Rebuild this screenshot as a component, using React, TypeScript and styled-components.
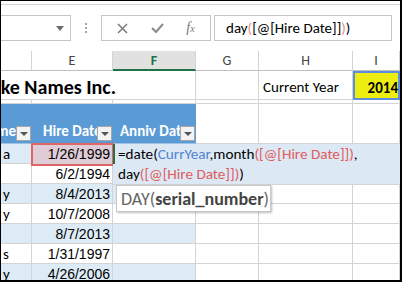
import styled, { createGlobalStyle } from "styled-components";

const GlobalStyle = createGlobalStyle`
  html, body {
    margin: 0;
    padding: 0;
    background: #ffffff;
  }
  * {
    box-sizing: border-box;
  }
`

const font = `Calibri, Carlito, Lato, "Liberation Sans", sans-serif`
const columns = "31px 81px 83px 63px 94px 1fr"

const Frame = styled.div`
  position: relative;
  width: 402px;
  height: 282px;
  overflow: hidden;
  background: #ffffff;
  border-style: solid;
  border-color: #000000;
  border-width: 1px 2px 2px 1px;
  font-family: ${font};
  color: #000000;
`

const TopRule = styled.div`
  height: 4px;
  border-bottom: 1px solid #d6d6d6;
`

const FormulaBar = styled.div`
  height: 46px;
  padding-top: 10px;
  display: flex;
  align-items: flex-start;
`

const NameBox = styled.div`
  width: 70px;
  height: 26px;
  border: 1px solid #c6c6c6;
  border-left: none;
  display: flex;
  align-items: center;
  justify-content: flex-end;
  padding-right: 6px;
`

const Dots = styled.div`
  margin-left: 14px;
  height: 26px;
  display: flex;
  flex-direction: column;
  justify-content: center;
  gap: 2px;
  span {
    width: 2px;
    height: 2px;
    background: #a8a8a8;
  }
`

const ButtonBox = styled.div`
  margin-left: 14px;
  width: 110px;
  height: 26px;
  border: 1px solid #c6c6c6;
  display: flex;
  align-items: center;
  justify-content: space-around;
  padding: 0 4px;
`

const FxLabel = styled.span`
  font-family: "Liberation Serif", serif;
  font-style: italic;
  font-size: 14px;
  color: #777777;
  small {
    font-size: 10px;
  }
`

const FormulaInput = styled.div`
  margin-left: 3px;
  width: 178px;
  height: 26px;
  border: 1px solid #c6c6c6;
  padding-left: 11px;
  display: flex;
  align-items: center;
  font-size: 15px;
  white-space: nowrap;
`

const Paren = styled.span`
  color: #e88a8a;
`

const Row = styled.div<{ $h: number }>`
  display: grid;
  grid-template-columns: ${columns};
  height: ${p => p.$h}px;
`

const ColHead = styled.div<{ $active?: boolean }>`
  display: flex;
  align-items: center;
  justify-content: center;
  font-size: 14px;
  color: ${p => (p.$active ? "#217346" : "#444444")};
  font-weight: ${p => (p.$active ? 700 : 400)};
  background: ${p => (p.$active ? "#e1e1e1" : "#ffffff")};
  border-right: 1px solid #d4d4d4;
  border-bottom: ${p => (p.$active ? "2px solid #217346" : "1px solid #bfbfbf")};
`

const Cell = styled.div<{ $bg?: string; $align?: string }>`
  position: relative;
  display: flex;
  align-items: center;
  justify-content: ${p => p.$align || "flex-start"};
  padding: 0 3px 0 2px;
  overflow: hidden;
  white-space: nowrap;
  font-size: 15px;
  background: ${p => p.$bg || "#ffffff"};
  border-right: 1px solid #d4d4d4;
  border-bottom: 1px solid #d4d4d4;
`

const DateCell = styled(Cell)`
  justify-content: flex-end;
  font-family: "Liberation Sans", Arial, sans-serif;
  font-size: 14px;
  padding-right: 2px;
  padding-top: 1px;
`

const TitleCell = styled(Cell)`
  overflow: visible;
  border-right: none;
  z-index: 1;
  padding-top: 4px;
`

const Title = styled.span`
  flex: none;
  display: block;
  width: 170px;
  margin-left: -57px;
  text-align: right;
  font-size: 20px;
  font-weight: 700;
`

const LabelCell = styled(Cell)`
  padding-left: 4px;
  padding-top: 4px;
`

const YearCell = styled(Cell)`
  background: #eded12;
  border: 2px solid #5b8fdc;
  font-weight: 700;
  justify-content: flex-end;
  padding: 4px 0 0 0;
  overflow: visible;
`

const HeadCell = styled.div`
  position: relative;
  display: flex;
  align-items: flex-end;
  padding: 0 0 3px 2px;
  background: #5b9bd5;
  color: #ffffff;
  font-weight: 700;
  font-size: 15px;
  white-space: nowrap;
  overflow: hidden;
  border-bottom: 1px solid #9dc3e6;
`

const HeadText = styled.span<{ $indent: number }>`
  margin-left: ${p => p.$indent}px;
`

const FilterButton = styled.div`
  position: absolute;
  right: 1px;
  bottom: 2px;
  width: 15px;
  height: 15px;
  background: #f3f3f3;
  border: 1px solid #a6a6a6;
  display: flex;
  align-items: center;
  justify-content: center;
  &::after {
    content: "";
    border-left: 4px solid transparent;
    border-right: 4px solid transparent;
    border-top: 4px solid #555555;
  }
`

const ActiveRef = styled.div`
  position: absolute;
  left: 30px;
  top: 142px;
  width: 83px;
  height: 23px;
  border: 2px solid #e06666;
  pointer-events: none;
`

const Editor = styled.div`
  position: absolute;
  left: 112px;
  top: 143px;
  right: 0;
  height: 41px;
  background: #dde8f5;
  font-size: 15.2px;
  line-height: 20px;
  white-space: nowrap;
  border-bottom: 1px solid #d4d4d4;
`

const EditorLine = styled.div<{ $active?: boolean }>`
  height: 20px;
  padding-left: 3px;
  border-left: 2px solid ${p => (p.$active ? "#217346" : "transparent")};
`

const Ref = styled.span<{ $kind: "name" | "col" }>`
  color: ${p => (p.$kind === "name" ? "#4f86d0" : "#e05c5c")};
`

const Tooltip = styled.div`
  position: absolute;
  left: 115px;
  top: 184px;
  width: 155px;
  height: 27px;
  background: #ffffff;
  border: 1px solid #c8c8c8;
  box-shadow: 1px 1px 2px rgba(0, 0, 0, 0.25);
  padding-left: 4px;
  display: flex;
  align-items: center;
  font-size: 18px;
  color: #666666;
  white-space: nowrap;
  b {
    color: #444444;
  }
`

const band = "#ddebf7"
const rows = [
  { name: "a", date: "1/26/1999" },
  { name: "", date: "6/2/1994" },
  { name: "y", date: "8/4/2013" },
  { name: "y", date: "10/7/2008" },
  { name: "", date: "8/7/2013" },
  { name: "s", date: "1/31/1997" },
  { name: "y", date: "4/26/2006" },
]

const App = () => {
  return (
    <>
      <GlobalStyle />
      <Frame>
        <TopRule />
        <FormulaBar>
          <NameBox>
            <svg width="8" height="5" viewBox="0 0 8 5">
              <path d="M0 0 H8 L4 5 Z" fill="#6b6b6b" />
            </svg>
          </NameBox>
          <Dots>
            <span />
            <span />
            <span />
          </Dots>
          <ButtonBox>
            <svg width="11" height="11" viewBox="0 0 11 11">
              <path d="M1 1 L10 10 M10 1 L1 10" stroke="#7a7a7a" strokeWidth="1.5" />
            </svg>
            <svg width="13" height="10" viewBox="0 0 13 10">
              <path d="M1 5 L5 9 L12 1" stroke="#8a8a8a" strokeWidth="2" fill="none" />
            </svg>
            <FxLabel>
              f<small>x</small>
            </FxLabel>
          </ButtonBox>
          <FormulaInput>
            day<Paren>(</Paren>[@[Hire Date]]<Paren>)</Paren>)
          </FormulaInput>
        </FormulaBar>

        <Row $h={20}>
          <ColHead />
          <ColHead>E</ColHead>
          <ColHead $active>F</ColHead>
          <ColHead>G</ColHead>
          <ColHead>H</ColHead>
          <ColHead>I</ColHead>
        </Row>

        <Row $h={29}>
          <TitleCell>
            <Title>Fake Names Inc.</Title>
          </TitleCell>
          <Cell style={{ borderRight: "none" }} />
          <Cell />
          <Cell />
          <LabelCell>Current Year</LabelCell>
          <YearCell>2014</YearCell>
        </Row>

        <Row $h={4}>
          <Cell />
          <Cell />
          <Cell />
          <Cell />
          <Cell />
          <Cell />
        </Row>

        <Row $h={40}>
          <HeadCell>
            <HeadText $indent={-24}>Name</HeadText>
            <FilterButton />
          </HeadCell>
          <HeadCell>
            <HeadText $indent={9}>Hire Date</HeadText>
            <FilterButton />
          </HeadCell>
          <HeadCell>
            <HeadText $indent={5}>Anniv Date</HeadText>
            <FilterButton />
          </HeadCell>
          <Cell />
          <Cell />
          <Cell />
        </Row>

        {rows.map((r, i) => {
          const bg = i % 2 === 0 ? band : "#ffffff"
          return (
            <Row $h={20} key={i}>
              <Cell $bg={bg}>{r.name}</Cell>
              <DateCell $bg={i === 0 ? "#dfccd6" : bg}>{r.date}</DateCell>
              <Cell $bg={bg} />
              <Cell />
              <Cell />
              <Cell />
            </Row>
          )
        })}

        <ActiveRef />

        <Editor>
          <EditorLine $active>
            =date(<Ref $kind="name">CurrYear</Ref>,month<Ref $kind="col">([@[Hire Date]])</Ref>,
          </EditorLine>
          <EditorLine>
            day<Ref $kind="col">([@[Hire Date]])</Ref>)
          </EditorLine>
        </Editor>

        <Tooltip>
          DAY(<b>serial_number</b>)
        </Tooltip>
      </Frame>
    </>
  )
}

export default App
